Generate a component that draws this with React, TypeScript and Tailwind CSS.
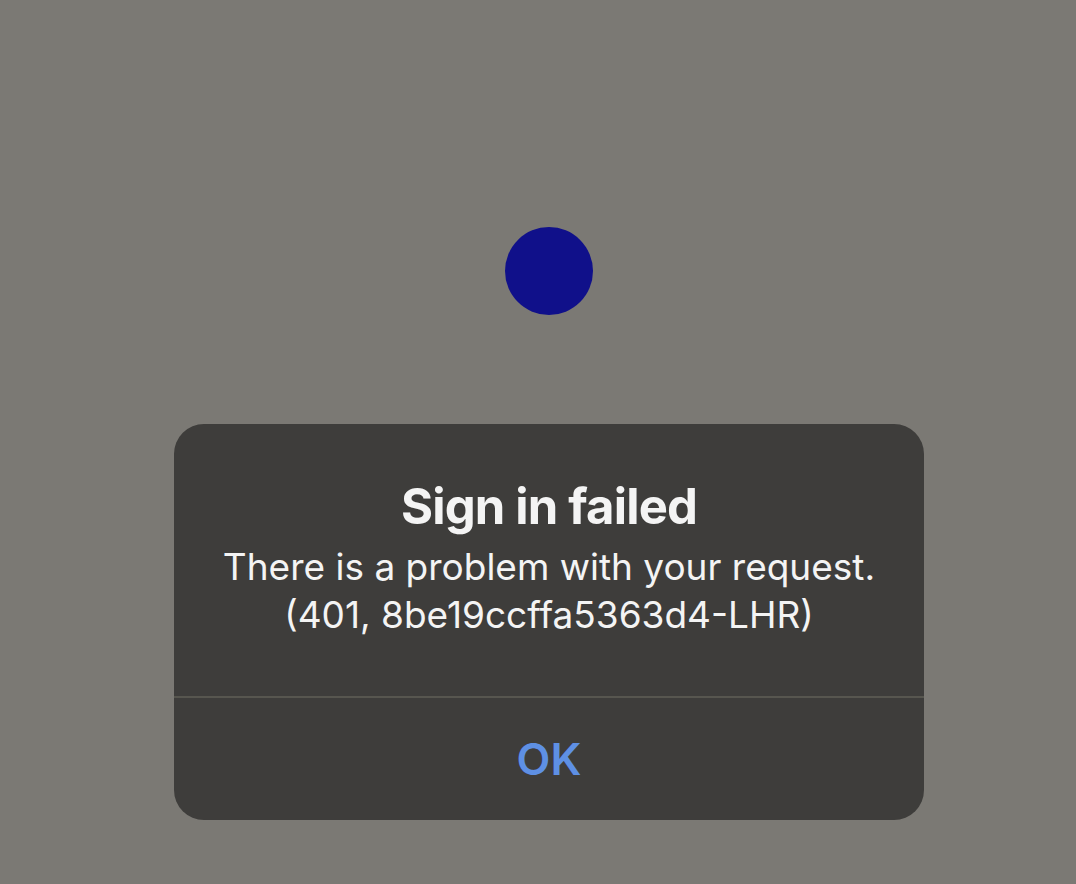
export default function App() {
  return (
    <div
      className="min-h-screen w-full bg-[#7b7974] flex flex-col items-center pl-[22px]"
      style={{ fontFamily: 'Inter, "Noto Sans", sans-serif' }}
    >
      <div className="mt-[227px] w-[88px] h-[88px] rounded-full bg-[#10108a]" />
      <div className="mt-[109px] w-[750px] h-[396px] rounded-[30px] bg-[#3e3d3b] flex flex-col">
        <div className="h-[272px] flex flex-col items-center pt-[55px] text-[#f4f4f4]">
          <div className="text-[49px] font-bold leading-[56px] tracking-[-0.8px]">Sign in failed</div>
          <div className="mt-[8px] text-[37px] leading-[48px] text-center">
            There is a problem with your request.
            <br />
            (401, 8be19ccffa5363d4-LHR)
          </div>
        </div>
        <div className="h-[2px] bg-[#57564f]" />
        <div className="flex-1 flex items-center justify-center">
          <span className="text-[44px] font-semibold text-[#5e90e4]">OK</span>
        </div>
      </div>
    </div>
  )
}
